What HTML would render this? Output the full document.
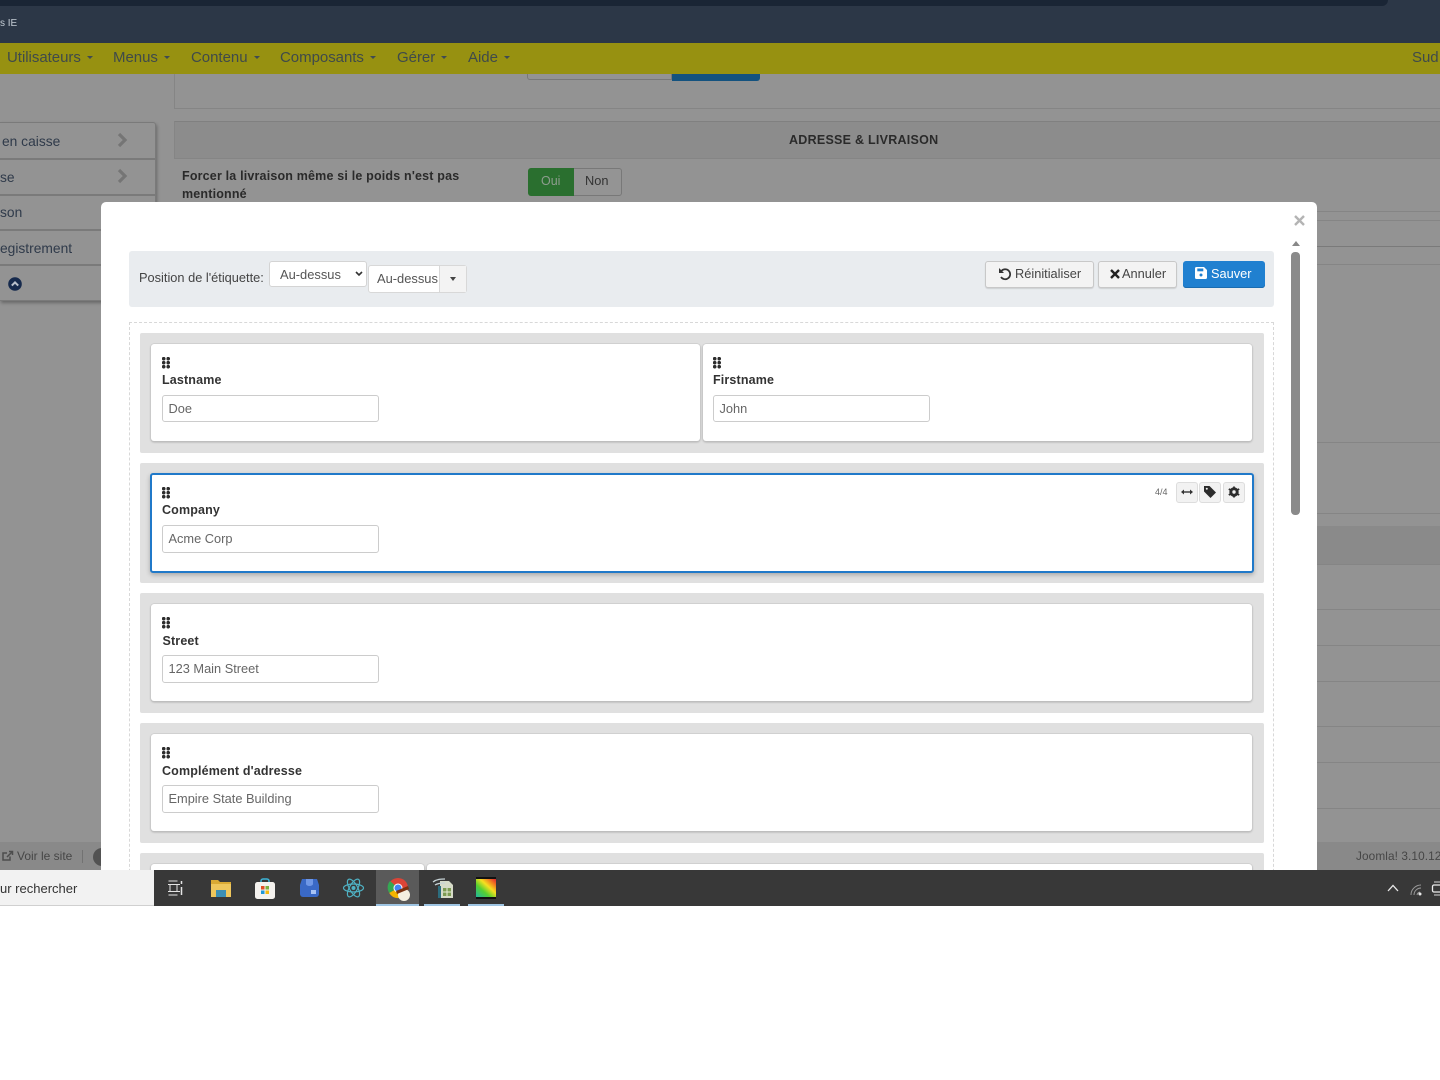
<!DOCTYPE html>
<html lang="fr">
<head>
<meta charset="utf-8">
<title>Joomla</title>
<style>
html,body{margin:0;padding:0;width:1440px;height:1080px;overflow:hidden;background:#fff}
body{font-family:"Liberation Sans",Arial,sans-serif;position:relative}
.a{position:absolute}
.t{position:absolute;white-space:nowrap;line-height:16px}
.l{position:absolute;left:174px;right:0;height:1px;background:#858585}
.m{top:50px;font-size:15px;color:#3f4a4a;letter-spacing:-.03px}
.car{display:inline-block;width:0;height:0;border-left:3px solid transparent;border-right:3px solid transparent;border-top:3px solid #3f4a52;margin-left:6px;vertical-align:3px}
.side{position:absolute;left:0;width:155px;height:1px;background:#7a7a7a}
.st{font-size:13.8px;color:#2f3a4a}
.row{position:absolute;left:140px;width:1124px;background:#e0e0e0;border-radius:2px}
.card{position:absolute;background:#fff;border-radius:3px;box-shadow:0 0 0 .5px #c4c4c4,0 1px 2px rgba(0,0,0,.3)}
.grip{position:absolute;width:8px;height:12px;background-image:radial-gradient(circle at 1.700px 1.700px,#2c2c2c 1.700px,transparent 1.950px);background-size:4.500px 4px}
.lab{position:absolute;font-size:12.5px;font-weight:bold;color:#333;letter-spacing:.15px;line-height:16px;white-space:nowrap}
.inp{position:absolute;height:25px;border:1px solid #ccc;border-radius:3px;font-size:12.8px;color:#666;line-height:26px;padding-left:5.500px;box-sizing:content-box;width:209.500px;background:#fff;white-space:nowrap}
.btn{position:absolute;top:261px;height:25px;border:1px solid #c8c8c8;border-radius:3px;background:#f3f3f3;font-size:12.5px;color:#444;line-height:24px;white-space:nowrap;box-sizing:content-box;box-shadow:0 1px 1px rgba(0,0,0,.12)}
.tb{position:absolute;top:482px;width:20px;height:19px;border:1px solid #ddd;border-radius:3px;background:#f2f2f2}
svg{position:absolute;overflow:visible}
</style>
</head>
<body>
<!-- page backdrop -->
<div class="a" style="left:0;top:0;width:1440px;height:906px;background:#939393"></div>
<div class="a" style="left:0;top:0;width:1440px;height:43px;background:#2c3747"></div>
<div class="a" style="left:0;top:0;width:1388px;height:6px;background:#1a2535;border-radius:0 0 8px 0"></div>
<div class="t" style="left:0;top:16px;font-size:10px;color:#c4ccd4">s IE</div>
<div class="a" style="left:0;top:43px;width:1440px;height:31px;background:#979111"></div>
<div class="t m" style="left:7px">Utilisateurs<span class="car"></span></div>
<div class="t m" style="left:113px">Menus<span class="car"></span></div>
<div class="t m" style="left:191px">Contenu<span class="car"></span></div>
<div class="t m" style="left:280px">Composants<span class="car"></span></div>
<div class="t m" style="left:397px">Gérer<span class="car"></span></div>
<div class="t m" style="left:468px">Aide<span class="car"></span></div>
<div class="t m" style="left:1412px">Sud</div>

<!-- backdrop content -->
<div class="a" style="left:527px;top:74px;width:145px;height:6px;background:#939393;border:1px solid #787878;border-top:0;box-sizing:border-box;border-radius:0 0 0 3px"></div>
<div class="a" style="left:672px;top:74px;width:88px;height:7px;background:#13527f;border-radius:0 0 3px 0"></div>
<div class="a" style="left:174px;top:74px;width:1px;height:35px;background:#858585"></div>
<div class="l" style="top:108px"></div>
<div class="a" style="left:174px;top:121px;width:1266px;height:38px;background:#8c8c8c;border-top:1px solid #808080;border-left:1px solid #858585;box-sizing:border-box"></div>
<div class="l" style="top:158px"></div>
<div class="t" style="left:789px;top:132px;font-size:12.5px;font-weight:bold;color:#2a2a2a;letter-spacing:.26px">ADRESSE &amp; LIVRAISON</div>
<div class="t" style="left:182px;top:167px;font-size:12.5px;font-weight:bold;color:#2a2a2a;line-height:18px;letter-spacing:.18px;white-space:normal;width:300px">Forcer la livraison même si le poids n'est pas mentionné</div>
<div class="a" style="left:528px;top:168px;width:46px;height:28px;background:#2a6f2f;border-radius:3px 0 0 3px"></div>
<div class="t" style="left:541px;top:173px;font-size:12.5px;color:#8d9c8e">Oui</div>
<div class="a" style="left:574px;top:168px;width:48px;height:28px;background:#949494;border:1px solid #787878;border-left:0;box-sizing:border-box;border-radius:0 3px 3px 0"></div>
<div class="t" style="left:585px;top:173px;font-size:12.8px;color:#333">Non</div>
<div class="l" style="left:1317px;top:211px"></div>
<div class="l" style="left:1317px;top:220px"></div>
<div class="l" style="left:1317px;top:246px;background:#7a7a7a"></div>
<div class="l" style="left:1317px;top:264px"></div>
<div class="l" style="left:1317px;top:442px"></div>
<div class="l" style="left:1317px;top:513px"></div>
<div class="a" style="left:1317px;top:526px;width:123px;height:39px;background:#8a8a8a"></div>
<div class="l" style="left:1317px;top:564px"></div>
<div class="l" style="left:1317px;top:609px"></div>
<div class="l" style="left:1317px;top:645px"></div>
<div class="l" style="left:1317px;top:681px"></div>
<div class="l" style="left:1317px;top:726px"></div>
<div class="l" style="left:1317px;top:762px"></div>
<div class="l" style="left:1317px;top:808px"></div>
<div class="a" style="left:0;top:842px;width:1440px;height:28px;background:#898989"></div>
<div class="t" style="left:1356px;top:848px;font-size:11.8px;color:#464646;letter-spacing:.1px">Joomla! 3.10.12</div>
<svg style="left:2px;top:850px" width="12" height="12" viewBox="0 0 12 12"><path d="M8 6.500V10H1V3h4M5 7l5-5M7 1.500h3.500V5" fill="none" stroke="#4d4d4d" stroke-width="1.500"/></svg>
<div class="t" style="left:17px;top:848px;font-size:12px;color:#464646">Voir le site</div>
<div class="a" style="left:82px;top:850px;width:1px;height:13px;background:#727272"></div>
<div class="a" style="left:93px;top:848px;width:18px;height:18px;border-radius:50%;background:#525252"></div>

<!-- sidebar -->
<div class="a" style="left:0;top:122px;width:156px;height:179px;background:#939393;border:1px solid #7a7a7a;border-left:0;box-sizing:border-box;border-radius:0 3px 3px 0;box-shadow:1px 2px 3px rgba(0,0,0,.3)"></div>
<div class="side" style="top:158px;height:2px"></div>
<div class="side" style="top:194px;height:2px"></div>
<div class="side" style="top:229px;height:2px"></div>
<div class="side" style="top:264px;height:2px"></div>
<div class="t st" style="left:2px;top:134px">en caisse</div>
<div class="t st" style="left:0;top:170px">se</div>
<div class="t st" style="left:0;top:205px">son</div>
<div class="t st" style="left:0;top:241px">egistrement</div>
<svg style="left:117px;top:133px" width="11" height="14" viewBox="0 0 11 14"><path d="M2 1l6 6-6 6" fill="none" stroke="#757575" stroke-width="3.200"/></svg>
<svg style="left:117px;top:169px" width="11" height="14" viewBox="0 0 11 14"><path d="M2 1l6 6-6 6" fill="none" stroke="#757575" stroke-width="3.200"/></svg>
<svg style="left:8px;top:277px" width="14" height="14" viewBox="0 0 14 14"><circle cx="7" cy="7" r="6.800" fill="#162a4d"/><path d="M3.800 8.600L7 5.400l3.200 3.200" fill="none" stroke="#b9c0cc" stroke-width="2"/></svg>

<!-- modal -->
<div class="a" style="left:101px;top:202px;width:1216px;height:700px;background:#fff;border-radius:5px 5px 0 0"></div>
<svg style="left:1294px;top:215px" width="11" height="11" viewBox="0 0 11 11"><path d="M1 1l9 9M10 1l-9 9" stroke="#b4b4b4" stroke-width="2.400"/></svg>

<!-- toolbar -->
<div class="a" style="left:129px;top:251px;width:1145px;height:56px;background:#e9ecef;border-radius:3px"></div>
<div class="t" style="left:139px;top:270px;font-size:12.8px;color:#444">Position de l'étiquette:</div>
<div class="a" style="left:269px;top:261px;width:98px;height:26px;background:#fff;border:1px solid #d4d4d4;box-sizing:border-box;border-radius:3px"></div>
<div class="t" style="left:280px;top:267px;font-size:12.9px;color:#555">Au-dessus</div>
<svg style="left:355px;top:271px" width="8" height="6" viewBox="0 0 8 6"><path d="M1 1l3 3 3-3" fill="none" stroke="#333" stroke-width="1.600"/></svg>
<div class="a" style="left:368px;top:265px;width:99px;height:28px;background:#fff;border:1px solid #d8d8d8;box-sizing:border-box;border-radius:3px"></div>
<div class="a" style="left:439px;top:266px;width:27px;height:26px;background:#f3f3f3;border-left:1px solid #d8d8d8;box-sizing:border-box"></div>
<div class="t" style="left:377px;top:271px;font-size:12.9px;color:#555">Au-dessus</div>
<div class="a" style="left:450px;top:277px;width:0;height:0;border-left:3.500px solid transparent;border-right:3.500px solid transparent;border-top:4px solid #444"></div>

<div class="btn" style="left:985px;width:107px"></div>
<svg style="left:998px;top:267px" width="14" height="14" viewBox="0 0 14 14"><path d="M3.200 4.200A5 5 0 1 1 3 10" fill="none" stroke="#333" stroke-width="1.700"/><path d="M1 1v5h5z" fill="#333"/></svg>
<div class="t" style="left:1015px;top:266px;font-size:12.8px;color:#444">Réinitialiser</div>
<div class="btn" style="left:1098px;width:77px"></div>
<svg style="left:1110px;top:269px" width="10" height="10" viewBox="0 0 10 10"><path d="M1 1l8 8M9 1l-8 8" stroke="#222" stroke-width="2.400"/></svg>
<div class="t" style="left:1122px;top:266px;font-size:12.8px;color:#444">Annuler</div>
<div class="a" style="left:1183px;top:261px;width:82px;height:27px;background:#2080d0;border-radius:3px;box-shadow:inset 0 -1px 0 #1a6cb0"></div>
<svg style="left:1195px;top:267px" width="12" height="12" viewBox="0 0 12 12"><path d="M1.500 0H9l3 3v7.500a1.500 1.500 0 0 1-1.500 1.500h-9A1.500 1.500 0 0 1 0 10.500v-9A1.500 1.500 0 0 1 1.500 0z" fill="#fff"/><rect x="2.300" y="1.500" width="6" height="2.800" fill="#2080d0"/><circle cx="6" cy="8" r="1.500" fill="#2080d0"/></svg>
<div class="t" style="left:1211px;top:266px;font-size:12.8px;color:#fff">Sauver</div>

<!-- scrollbar -->
<div class="a" style="left:1292px;top:241px;width:0;height:0;border-left:4px solid transparent;border-right:4px solid transparent;border-bottom:5px solid #888"></div>
<div class="a" style="left:1291px;top:252px;width:9px;height:263px;background:#8a8a8a;border-radius:4px"></div>

<!-- dashed container -->
<div class="a" style="left:129px;top:322px;width:1145px;height:580px;border:1px dashed #d8d8d8;border-bottom:0;box-sizing:border-box"></div>

<!-- row 1 -->
<div class="row" style="top:333px;height:120px"></div>
<div class="card" style="left:151px;top:344px;width:549px;height:97px"></div>
<div class="grip" style="left:162px;top:357px"></div>
<div class="lab" style="left:162px;top:372px">Lastname</div>
<div class="inp" style="left:162px;top:395px">Doe</div>
<div class="card" style="left:703px;top:344px;width:549px;height:97px"></div>
<div class="grip" style="left:713px;top:357px"></div>
<div class="lab" style="left:713px;top:372px">Firstname</div>
<div class="inp" style="left:713px;top:395px">John</div>

<!-- row 2 -->
<div class="row" style="top:463px;height:120px"></div>
<div class="card" style="left:150px;top:473px;width:1104px;height:100px;border:2px solid #2079c9;box-sizing:border-box;box-shadow:0 2px 5px rgba(0,0,0,.25)"></div>
<div class="grip" style="left:162px;top:487px"></div>
<div class="lab" style="left:162px;top:502px">Company</div>
<div class="inp" style="left:162px;top:525px;height:26px;line-height:26px">Acme Corp</div>
<div class="t" style="left:1155px;top:484px;font-size:9px;color:#666">4/4</div>
<div class="tb" style="left:1176px"></div>
<svg style="left:1181px;top:488px" width="12" height="8" viewBox="0 0 12 8"><path d="M2 4h8" stroke="#333" stroke-width="1.400"/><path d="M0 4l3-2.500v5zM12 4L9 1.500v5z" fill="#333"/></svg>
<div class="tb" style="left:1199px"></div>
<svg style="left:1204px;top:486px" width="12" height="12" viewBox="0 0 12 12"><path d="M0 0h5.500L12 6.500 6.500 12 0 5.500z" fill="#2c2c2c"/><circle cx="2.800" cy="2.800" r="1" fill="#f2f2f2"/></svg>
<div class="tb" style="left:1223px"></div>
<svg style="left:1228px;top:486px" width="12" height="12" viewBox="0 0 12 12"><circle cx="6" cy="6" r="3.400" fill="none" stroke="#2c2c2c" stroke-width="2.600"/><path d="M6 .5v11M.8 3l10.400 6M.8 9l10.400-6" stroke="#2c2c2c" stroke-width="1.800"/><circle cx="6" cy="6" r="1.700" fill="#f2f2f2"/></svg>

<!-- row 3 -->
<div class="row" style="top:593px;height:120px"></div>
<div class="card" style="left:151px;top:604px;width:1101px;height:97px"></div>
<div class="grip" style="left:162px;top:617px"></div>
<div class="lab" style="left:162.500px;top:633px">Street</div>
<div class="inp" style="left:162px;top:655px;height:26px;line-height:26px">123 Main Street</div>

<!-- row 4 -->
<div class="row" style="top:723px;height:120px"></div>
<div class="card" style="left:151px;top:734px;width:1101px;height:97px"></div>
<div class="grip" style="left:162px;top:747px"></div>
<div class="lab" style="left:162px;top:763px">Complément d'adresse</div>
<div class="inp" style="left:162px;top:785px;height:26px;line-height:26px">Empire State Building</div>

<!-- row 5 -->
<div class="row" style="top:853px;height:30px"></div>
<div class="card" style="left:151px;top:864px;width:273px;height:20px"></div>
<div class="card" style="left:427px;top:864px;width:825px;height:20px"></div>

<!-- taskbar -->
<div class="a" style="left:0;top:870px;width:154px;height:36px;background:#f2f2f2;border-bottom:1px solid #d0d0d0;box-sizing:border-box"></div>
<div class="t" style="left:0;top:881px;font-size:13px;color:#333">ur rechercher</div>
<div class="a" style="left:154px;top:870px;width:1286px;height:36px;background:#383838"></div>
<div class="a" style="left:376px;top:870px;width:43px;height:36px;background:#5a5a5a"></div>
<div class="a" style="left:376px;top:904px;width:43px;height:2px;background:#9fc5e3"></div>
<div class="a" style="left:424px;top:904px;width:36px;height:2px;background:#9fc5e3"></div>
<div class="a" style="left:468px;top:904px;width:36px;height:2px;background:#9fc5e3"></div>

<svg style="left:167px;top:880px" width="16" height="16" viewBox="0 0 16 16"><path d="M1.500 1h9M1.500 15h9M3 4.500h7V11.500H3z M1 4.500h12M1 11.500h12" fill="none" stroke="#e4e4e4" stroke-width="1"/><path d="M14.500 1v3M14.500 7v8" stroke="#e4e4e4" stroke-width="1.500"/></svg>
<svg style="left:211px;top:879px" width="20" height="18" viewBox="0 0 20 18"><path d="M0 1h7l2 2h11v15H0z" fill="#d9a934"/><rect x="0" y="5" width="20" height="13" fill="#eec65c"/><rect x="5" y="11" width="10" height="7" fill="#3c8fb4"/></svg>
<svg style="left:255px;top:878px" width="20" height="21" viewBox="0 0 20 21"><path d="M6 5V3a2 2 0 0 1 2-2h4a2 2 0 0 1 2 2v2" fill="none" stroke="#3cb4d8" stroke-width="1.500"/><rect x="0" y="4" width="20" height="17" rx="2.500" fill="#f4f2ee"/><rect x="6" y="8" width="3.500" height="3.500" fill="#e04f26"/><rect x="10.500" y="8" width="3.500" height="3.500" fill="#7cb342"/><rect x="6" y="12.500" width="3.500" height="3.500" fill="#1f97d8"/><rect x="10.500" y="12.500" width="3.500" height="3.500" fill="#f5b90f"/></svg>
<svg style="left:300px;top:879px" width="19" height="18" viewBox="0 0 19 18"><path d="M2 0h15l2 6v9a3 3 0 0 1-3 3H3a3 3 0 0 1-3-3V6z" fill="#3a69c6"/><path d="M6 0h7v5a3.500 2 0 0 1-7 0z" fill="#6f97e6"/><rect x="11" y="11" width="5" height="4" fill="#a9c4f5"/></svg>
<svg style="left:343px;top:878px" width="21" height="20" viewBox="0 0 21 20"><g fill="none" stroke="#4fb2c4" stroke-width="1.200"><ellipse cx="10.500" cy="10" rx="10" ry="4"/><ellipse cx="10.500" cy="10" rx="10" ry="4" transform="rotate(60 10.500 10)"/><ellipse cx="10.500" cy="10" rx="10" ry="4" transform="rotate(120 10.500 10)"/></g><circle cx="10.500" cy="10" r="2" fill="#4fb2c4"/></svg>
<svg style="left:387px;top:877px" width="24" height="24" viewBox="0 0 24 24"><circle cx="11" cy="11" r="10" fill="#db4437"/><path d="M11 11L2.300 16A10 10 0 0 1 3 4z" fill="#34a853"/><path d="M11 11l8.700 5A10 10 0 0 1 2.300 16z" fill="#f4b400"/><circle cx="11" cy="11" r="4.500" fill="#fff"/><circle cx="11" cy="11" r="3.500" fill="#4285f4"/><circle cx="17" cy="18" r="6" fill="#f5f0e0"/><path d="M9 14l12-5 1 3-12 5z" fill="#7a3210"/></svg>
<svg style="left:432px;top:877px" width="22" height="22" viewBox="0 0 22 22"><path d="M8 4h9l4 4v13H8z" fill="#d6dbc8"/><path d="M11 11h8v8h-8z" fill="#7d9b52"/><path d="M15 11v8M11 15h8" stroke="#e8ecd8" stroke-width="1"/><rect x="6" y="9" width="3" height="12" fill="#2c6d7e"/><path d="M1 5c4-3 8-3 12-3M3 8c3-2 7-2 10-2" fill="none" stroke="#c7d3d6" stroke-width="1.300"/></svg>
<svg style="left:476px;top:877px" width="20" height="22" viewBox="0 0 20 22"><defs><linearGradient id="g" x1="0" y1="1" x2="1" y2="0"><stop offset="0" stop-color="#1fb6a0"/><stop offset=".35" stop-color="#55d030"/><stop offset=".6" stop-color="#f5e020"/><stop offset=".8" stop-color="#f08020"/><stop offset="1" stop-color="#e02030"/></linearGradient></defs><rect x="0" y="0" width="20" height="22" fill="#111"/><rect x="0" y="2" width="20" height="18" fill="url(#g)"/></svg>

<svg style="left:1387px;top:884px" width="12" height="8" viewBox="0 0 12 8"><path d="M1 7l5-5.500L11 7" fill="none" stroke="#e8e8e8" stroke-width="1.300"/></svg>
<svg style="left:1410px;top:884px" width="13" height="12" viewBox="0 0 13 12"><path d="M1 11A10 10 0 0 1 11 1M4 11a7 7 0 0 1 7-7M7 11a4 4 0 0 1 3-3" fill="none" stroke="#9a9a9a" stroke-width="1"/><circle cx="10" cy="10" r="1.500" fill="#e8e8e8"/></svg>
<svg style="left:1432px;top:881px" width="8" height="15" viewBox="0 0 8 15"><path d="M2 1h6M2 14h6" stroke="#d8d8d8" stroke-width="1"/><rect x=".5" y="4" width="10" height="7" rx="1.500" fill="none" stroke="#ececec" stroke-width="1.300"/></svg>
</body>
</html>
